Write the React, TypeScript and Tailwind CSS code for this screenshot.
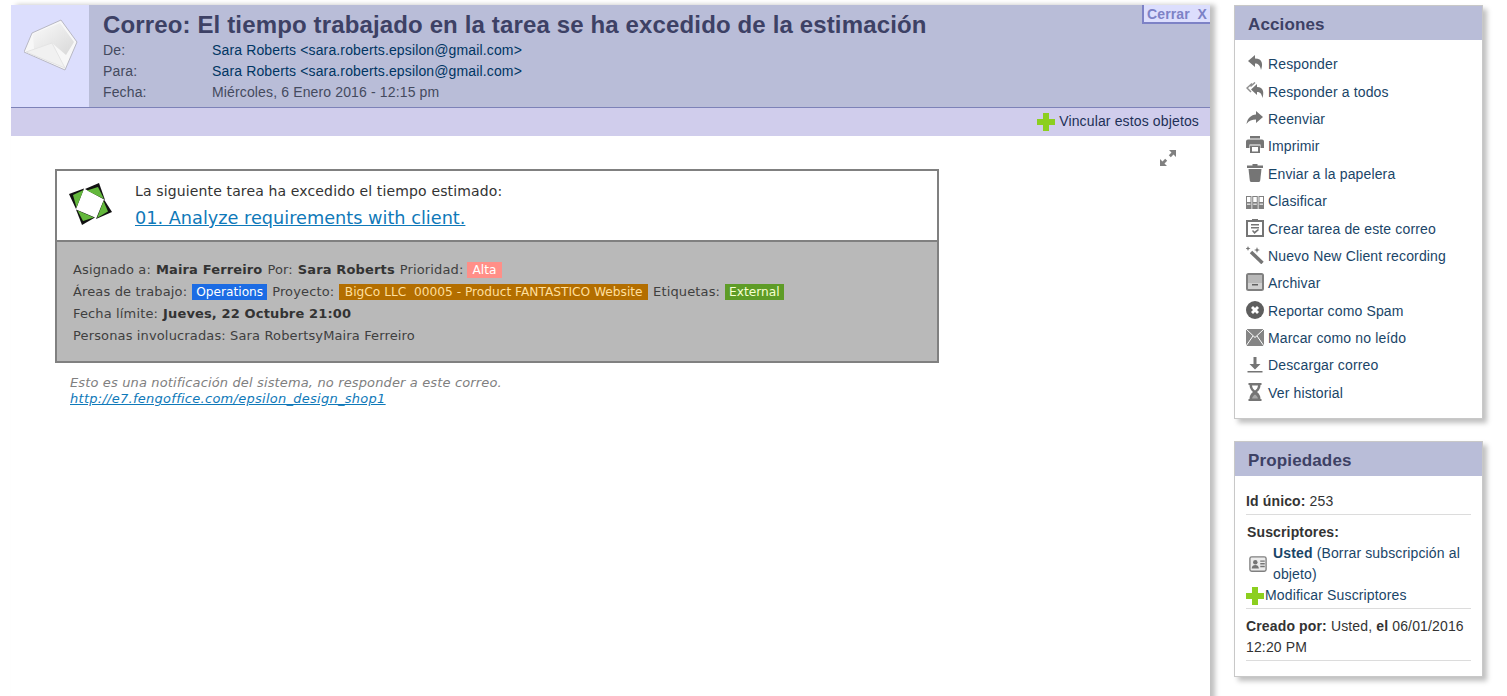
import type { ReactNode } from "react";

const Plus = ({ className }: { className?: string }) => (
  <svg viewBox="0 0 18 18" className={className}>
    <path d="M6 0h6v6h6v6h-6v6H6v-6H0V6h6z" fill="#8ccf1f" />
  </svg>
);

const Glyph = ({ children }: { children: ReactNode }) => (
  <svg viewBox="0 0 18 18" className="h-[18px] w-[18px] shrink-0" fill="#757575">
    {children}
  </svg>
);

const actions: { label: string; icon: ReactNode }[] = [
  {
    label: "Responder",
    icon: <path d="M9 1 2 7l7 6V9.500c3 0 5 1.500 6 6.500 2-5 2-11.500-6-11.500z" />,
  },
  {
    label: "Responder a todos",
    icon: (
      <>
        <path d="M11 2 5 7.500l6 5.500v-3c3 0 4.500 1.500 5.500 6 1.500-5 1.500-11-5.500-11z" />
        <path d="M6 1.500 1 6l4 4M9 .5 4.500 4.500" fill="none" stroke="#909090" strokeWidth="1.500" />
      </>
    ),
  },
  {
    label: "Reenviar",
    icon: <path d="M10 2l7 6-7 6v-3.500c-4 0-7 1-9.500 4.500 1-6 4.500-9 9.500-9.500z" />,
  },
  {
    label: "Imprimir",
    icon: (
      <>
        <path d="M4 0h10v2.500H4zM2 3.500h14a2 2 0 0 1 2 2V12h-3.500V8.500h-11V12H0V5.500a2 2 0 0 1 2-2z" />
        <path d="M4 9.500h10V17H4zM6 11v4.500h6V11z" fillRule="evenodd" />
      </>
    ),
  },
  {
    label: "Enviar a la papelera",
    icon: (
      <>
        <path d="M6.500 0h5v1.500H17v2.500H1V1.500h5.500z" />
        <path d="M2.500 5h13l-1.300 11.500c-.1.800-.7 1.500-1.500 1.500H5.300c-.8 0-1.400-.7-1.500-1.500z" />
      </>
    ),
  },
  {
    label: "Clasificar",
    icon: (
      <>
        <path d="M0 5h5.500v13H0zM6.250 5h5.500v13h-5.500zM12.500 5H18v13h-5.500z" fill="#808080" />
        <path d="M1 6h3.500v5H1zM7.250 6h3.500v5h-3.500zM13.500 6H17v5h-3.500z" fill="#ffffff" />
        <path d="M1 12.500h3.500V14H1zM7.250 12.500h3.500V14h-3.500zM13.500 12.500H17V14h-3.500z" fill="#d8d8d8" />
      </>
    ),
  },
  {
    label: "Crear tarea de este correo",
    icon: (
      <>
        <path d="M0 1h6V0h6v1h6v17H0zM2 3v13h14V3z" fillRule="evenodd" />
        <path d="M5 5h8v1.500H5zM5 8h8v1.500H5zM6 12l1-1 1.500 1.500L12 10l1 1-4.500 4z" />
      </>
    ),
  },
  {
    label: "Nuevo New Client recording",
    icon: (
      <>
        <path d="M5 6 16.500 17" fill="none" stroke="#757575" strokeWidth="3.500" />
        <path d="M2 0l.7 1.800 1.800.7-1.800.7L2 5l-.7-1.800L-.5 2.500l1.800-.7zM11 1l.8 2.200L14 4l-2.200.8L11 7l-.8-2.200L8 4l2.200-.8z" />
      </>
    ),
  },
  {
    label: "Archivar",
    icon: (
      <>
        <rect x="1" y="1" width="16" height="16" rx="1.500" fill="#cfcfcf" stroke="#808080" strokeWidth="2" />
        <path d="M2 2h14v8H2z" fill="#b8b8b8" />
        <path d="M6 11h6v1.500H6z" fill="#606060" />
      </>
    ),
  },
  {
    label: "Reportar como Spam",
    icon: (
      <>
        <circle cx="9" cy="9" r="9" fill="#5e5e5e" />
        <path d="M5 7l2-2 2 2 2-2 2 2-2 2 2 2-2 2-2-2-2 2-2-2 2-2z" fill="#ffffff" />
      </>
    ),
  },
  {
    label: "Marcar como no leído",
    icon: (
      <>
        <path d="M0 1h18v17H0z" fill="#858585" />
        <path d="M0 1l9 8.500L18 1M0 18l7-10M18 18l-7-10" fill="none" stroke="#ffffff" strokeWidth="1" />
      </>
    ),
  },
  {
    label: "Descargar correo",
    icon: <path d="M7.500 2h3v7h4L9 14.500 3.500 9h4zM1.500 16h15v1.500h-15z" />,
  },
  {
    label: "Ver historial",
    icon: (
      <>
        <path d="M2.500 0h13v2h-1c0 3-1.300 5.500-3.500 7 2.200 1.500 3.500 4 3.500 7h1v2h-13v-2h1c0-3 1.300-5.500 3.500-7C5.300 7.500 3.500 5 3.500 2h-1z" />
        <path d="M6 2.500h6c-.2 2-1.300 4-3 5-1.700-1-2.800-3-3-5z" fill="#ffffff" />
        <path d="M6 15.500c.5-2 1.500-3 3-4 1.500 1 2.500 2 3 4z" fill="#a8a8a8" />
      </>
    ),
  },
];

const headerRows = [
  { label: "De:", value: "Sara Roberts <sara.roberts.epsilon@gmail.com>", color: "text-[#003562]" },
  { label: "Para:", value: "Sara Roberts <sara.roberts.epsilon@gmail.com>", color: "text-[#003562]" },
  { label: "Fecha:", value: "Miércoles, 6 Enero 2016 - 12:15 pm", color: "text-[#444a5e]" },
];

const Tag = ({ className, children }: { className: string; children: ReactNode }) => (
  <span className={`text-[12.2px] leading-[16px] tracking-normal ${className}`}>{children}</span>
);

const App = () => {
  return (
    <div className="flex h-[696px] overflow-hidden bg-white pl-[11px] pt-[5px] font-['Liberation_Sans',Arial,sans-serif] text-[14px] tracking-[0.14px]">
      <div className="relative h-[720px] w-[1199px] shrink-0 shadow-[5px_0_5px_rgba(0,0,0,0.25)]">
        <div className="absolute right-0 top-0 flex h-[19px] w-[68px] items-center justify-between border-b-2 border-l-2 border-[#7d82c6] bg-[#dcdefd] pl-[3px] pr-[3px] pt-px text-[14px] font-bold text-[#7d82c6]">
          <span>Cerrar</span>
          <span>X</span>
        </div>

        <div className="flex h-[103px] border-b border-[#7d82b8]">
          <div className="w-[78px] shrink-0 bg-[#dcdefd] pl-[13px] pt-[13px]">
            <svg viewBox="0 0 54 54" className="h-[54px] w-[54px]">
              <defs>
                <linearGradient id="flap" x1="0" y1="0" x2="1" y2="1">
                  <stop offset="0" stopColor="#fafafa" />
                  <stop offset="1" stopColor="#d8d8d8" />
                </linearGradient>
              </defs>
              <path d="M37 2 53 24 41 52 0 34 8 15z" fill="#f7f7f7" stroke="#b8b8c4" strokeWidth="1" />
              <path d="M36 5 50 24 42 37 28 25 10 31 9 16z" fill="url(#flap)" />
              <path d="M2 34 28 25 41 50z" fill="#f1f1f1" stroke="#e0e0e0" strokeWidth="0.800" />
            </svg>
          </div>
          <div className="flex-1 bg-[#b9bdd8] pl-[14px] pt-[6px]">
            <h1 className="text-[24px] font-bold leading-[28px] text-[#3d4165]">
              Correo: El tiempo trabajado en la tarea se ha excedido de la estimación
            </h1>
            <div className="mt-px">
              {headerRows.map((row) => (
                <div key={row.label} className="flex h-[21px] items-center">
                  <span className="w-[109px] text-[#444a5e]">{row.label}</span>
                  <span className={row.color}>{row.value}</span>
                </div>
              ))}
            </div>
          </div>
        </div>

        <div className="flex h-[28px] items-center justify-end gap-[4px] bg-[#d0cdec] pb-[2px] pr-[11px] text-[#1d3057]">
          <Plus className="mt-[2px] h-[18px] w-[18px]" />
          <span>Vincular estos objetos</span>
        </div>

        <div className="relative px-[44px] pt-[33px] font-['DejaVu_Sans',sans-serif] text-[13px]">
          <svg viewBox="0 0 18 18" className="absolute right-[33px] top-[13px] h-[18px] w-[18px]" fill="#808080">
            <path d="M10 1h7v7l-2.500-2.500-2.700 2.700-2-2 2.700-2.700zM8 17H1v-7l2.500 2.500 2.700-2.700 2 2-2.700 2.700z" />
          </svg>

          <div className="w-[884px] border-2 border-[#808080]">
            <div className="flex h-[71px] border-b-2 border-[#808080] bg-white">
              <svg viewBox="0 0 44 44" className="ml-[11px] mt-[11px] h-[44px] w-[44px] shrink-0">
                <path d="M17 7 31 1 37 18z" fill="#111" />
                <path d="M19 8.500 30 5 36 17z" fill="#63b83c" />
                <path d="M1 12 16 6.500 8 27z" fill="#111" />
                <path d="M5 13 15.500 8 8.500 25.500z" fill="#63b83c" />
                <path d="M14 43 8 27.500 27 35.500z" fill="#111" />
                <path d="M15 39 9.500 28.500 26 35.500z" fill="#63b83c" />
                <path d="M44 30 36 17.500 28 37z" fill="#111" />
                <path d="M40 29.500 35.500 19 29 36z" fill="#63b83c" />
              </svg>
              <div className="ml-[23px] pt-[11px]">
                <div className="text-[14px] leading-[18px] text-[#333]">La siguiente tarea ha excedido el tiempo estimado:</div>
                <a className="mt-[6px] block text-[17.7px] leading-[24px] tracking-normal text-[#0f79b9] underline">
                  01. Analyze requirements with client.
                </a>
              </div>
            </div>
            <div className="h-[119px] bg-[#b9b9b9] pl-[16px] pt-[17px] text-[#3f3f3f]">
              <div className="flex h-[22px] items-center gap-[5px]">
                <span>Asignado a:</span>
                <b className="text-[#333]">Maira Ferreiro</b>
                <span>Por:</span>
                <b className="text-[#333]">Sara Roberts</b>
                <span>Prioridad:</span>
                <Tag className="ml-[-2px] bg-[#ff8f88] px-[6px] text-white">Alta</Tag>
              </div>
              <div className="flex h-[22px] items-center gap-[5px]">
                <span>Áreas de trabajo:</span>
                <Tag className="bg-[#1c6ce4] px-[4px] text-white">Operations</Tag>
                <span>Proyecto:</span>
                <Tag className="whitespace-pre bg-[#b36e00] px-[5.5px] text-[#ffdf9c]">BigCo LLC  00005 - Product FANTASTICO Website</Tag>
                <span>Etiquetas:</span>
                <Tag className="bg-[#5e9c27] px-[4px] text-[#f6ffd0]">External</Tag>
              </div>
              <div className="flex h-[22px] items-center gap-[5px]">
                <span>Fecha límite:</span>
                <b className="text-[#333]">Jueves, 22 Octubre 21:00</b>
              </div>
              <div className="flex h-[22px] items-center">Personas involucradas: Sara RobertsyMaira Ferreiro</div>
            </div>
          </div>

          <div className="ml-[15px] mt-[12px] text-[13px] italic leading-[16px] text-[#808080]">
            <div>Esto es una notificación del sistema, no responder a este correo.</div>
            <a className="tracking-[0.27px] text-[#0f79b9] underline">http://e7.fengoffice.com/epsilon_design_shop1</a>
          </div>
        </div>
      </div>

      <div className="ml-[24px] flex w-[249px] shrink-0 flex-col gap-[22px]">
        <section className="h-[414px] border border-[#c8c8c8] shadow-[4px_4px_5px_rgba(0,0,0,0.25)]">
          <h2 className="flex h-[34px] items-center bg-[#b9bdd8] pl-[13px] pt-[3px] text-[17px] font-bold text-[#3d4165]">Acciones</h2>
          <ul className="pl-[11px] pt-[11px] text-[#1a4568]">
            {actions.map((action) => (
              <li key={action.label} className="flex h-[27.4px] items-center gap-[4px]">
                <span className="mt-[-3px] flex">
                  <Glyph>{action.icon}</Glyph>
                </span>
                <span>{action.label}</span>
              </li>
            ))}
          </ul>
        </section>

        <section className="h-[236px] border border-[#c8c8c8] text-[#333] shadow-[4px_4px_5px_rgba(0,0,0,0.25)]">
          <h2 className="flex h-[34px] items-center bg-[#b9bdd8] pl-[13px] pt-[3px] text-[17px] font-bold text-[#3d4165]">Propiedades</h2>
          <div className="mx-[11px] pt-[15px]">
            <div className="h-[24px] border-b border-[#dcdcdc] leading-[20px]">
              <b>Id único:</b> 253
            </div>
            <div className="h-[94px] border-b border-[#dcdcdc] pt-[7px]">
              <b className="block pl-px leading-[21px]">Suscriptores:</b>
              <div className="flex items-center text-[#1a4568]">
                <svg viewBox="0 0 20 18" className="ml-[3px] mr-[6px] h-[18px] w-[18px] shrink-0">
                  <rect x="1" y="1" width="18" height="16" rx="2" fill="#ececec" stroke="#808080" strokeWidth="1.500" />
                  <circle cx="7" cy="7" r="2.500" fill="#757575" />
                  <path d="M3 14c0-3 2-4 4-4s4 1 4 4zM12.500 5h5v1.500h-5zM12.500 8h5v1.500h-5zM12.500 11h5v1.500h-5z" fill="#757575" />
                </svg>
                <div className="leading-[21px]">
                  <b>Usted</b> (Borrar subscripción al objeto)
                </div>
              </div>
              <div className="flex h-[21px] items-center text-[#1a4568]">
                <Plus className="h-[18px] w-[18px] shrink-0" />
                <span className="ml-px">Modificar Suscriptores</span>
              </div>
            </div>
            <div className="h-[52px] border-b border-[#dcdcdc] pt-[7px] leading-[21px]">
              <b>Creado por:</b> Usted, <b>el</b> 06/01/2016 12:20 PM
            </div>
          </div>
        </section>
      </div>
    </div>
  );
};

export default App;
